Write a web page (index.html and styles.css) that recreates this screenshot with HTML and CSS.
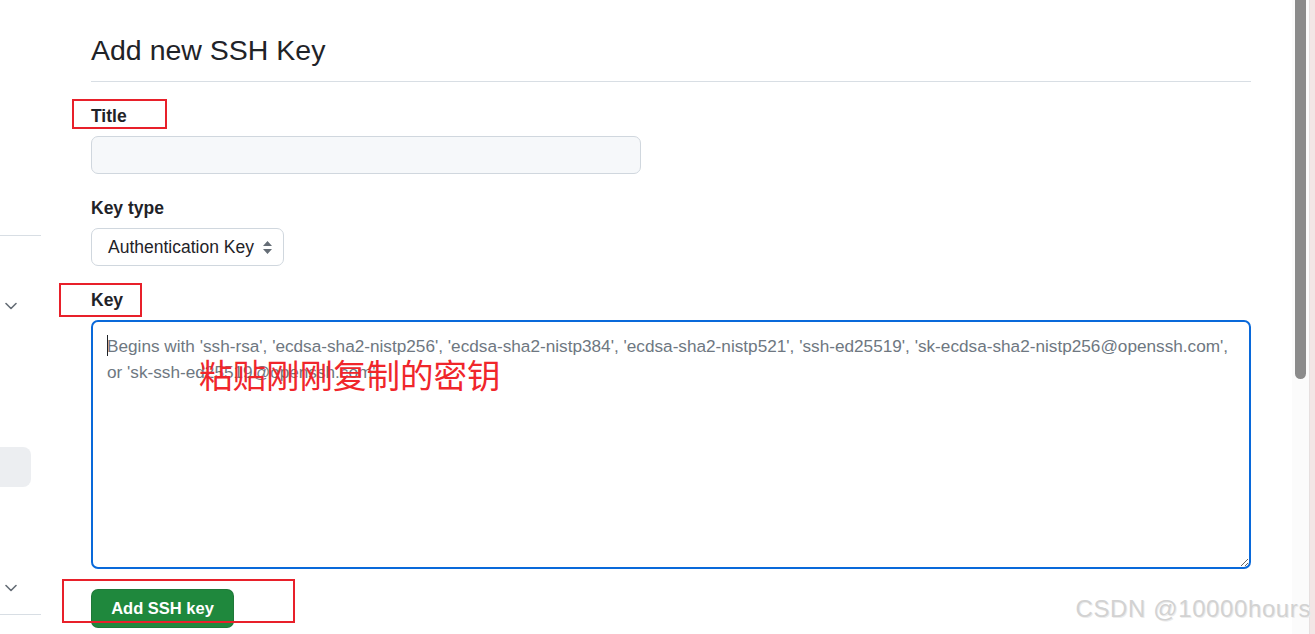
FILE: index.html
```html
<!DOCTYPE html>
<html>
  <head>
    <meta charset="utf-8">
    <title>Add new SSH Key</title>
    <link rel="stylesheet" href="styles.css">
  </head>

  <body>
    <div class="page">
      <aside class="side-nav">
        <div class="side-rule side-rule-top"></div>
        <div class="side-chevron side-chevron-top">
          <svg width="12" height="8" viewBox="0 0 12 8"><path d="M1 1.5 6 6.5 11 1.5" fill="none" stroke="#656d76" stroke-width="1.6" stroke-linecap="round" stroke-linejoin="round"/></svg>
        </div>
        <div class="side-item"></div>
        <div class="side-chevron side-chevron-bottom">
          <svg width="12" height="8" viewBox="0 0 12 8"><path d="M1 1.5 6 6.5 11 1.5" fill="none" stroke="#656d76" stroke-width="1.6" stroke-linecap="round" stroke-linejoin="round"/></svg>
        </div>
        <div class="side-rule"></div>
      </aside>

      <main class="main">
        <h2 class="subhead">Add new SSH Key</h2>

        <form class="key-form">
          <div class="form-group">
            <label class="form-label">Title</label>
            <input class="form-input title-input" type="text">
          </div>

          <div class="form-group">
            <label class="form-label">Key type</label>
            <div class="select-box">
              <span>Authentication Key</span>
              <svg width="11" height="15" viewBox="0 0 11 15"><path d="M5.5 1 10 6H1z M5.5 14 1 9h9z" fill="#656d76"/></svg>
            </div>
          </div>

          <div class="form-group">
            <label class="form-label">Key</label>
            <div class="key-wrap">
              <textarea class="key-area" placeholder="Begins with 'ssh-rsa', 'ecdsa-sha2-nistp256', 'ecdsa-sha2-nistp384', 'ecdsa-sha2-nistp521', 'ssh-ed25519', 'sk-ecdsa-sha2-nistp256@openssh.com',&#10;or 'sk-ssh-ed25519@openssh.com'"></textarea>
              <span class="caret"></span>
              <span class="note">粘贴刚刚复制的密钥</span>
            </div>
          </div>

          <button class="btn-primary" type="button">Add SSH key</button>
        </form>
      </main>

      <div class="scroll-track">
        <div class="scroll-thumb"></div>
      </div>
      <div class="edge-strip"></div>

      <div class="mark mark-title"></div>
      <div class="mark mark-key"></div>
      <div class="mark mark-button"></div>
      <div class="watermark">CSDN @10000hours</div>
    </div>
  </body>
</html>
```

FILE: styles.css
```css
* {
  box-sizing: border-box;
}

body {
  margin: 0;
  height: 634px;
  overflow: hidden;
  background: #ffffff;
  color: #1f2328;
  font-family: 'Liberation Sans', Arial, sans-serif;
}

.page {
  position: relative;
  display: flex;
  height: 634px;
}

/* left nav remnant */
.side-nav {
  width: 41px;
  flex-shrink: 0;
  display: flex;
  flex-direction: column;
}

.side-rule {
  height: 1px;
  width: 41px;
  background: #d8dee4;
}

.side-rule-top {
  margin-top: 235px;
}

.side-chevron {
  padding-left: 5px;
  height: 8px;
  line-height: 0;
}

.side-chevron-top {
  margin-top: 66px;
}

.side-item {
  margin-top: 137px;
  width: 31px;
  height: 40px;
  background: #eceef1;
  border-radius: 0 8px 8px 0;
}

.side-chevron-bottom {
  margin-top: 97px;
  margin-bottom: 22px;
}

/* main column */
.main {
  width: 1160px;
  margin-left: 50px;
  flex-shrink: 0;
}

.subhead {
  margin: 28px 0 0;
  padding-bottom: 8px;
  border-bottom: 1px solid #d8dee4;
  font-size: 28.5px;
  font-weight: 400;
  line-height: 45px;
}

.form-group {
  margin-top: 21px;
}

.form-label {
  display: block;
  margin-bottom: 7px;
  font-size: 17.5px;
  font-weight: 700;
  line-height: 26px;
}

.form-input {
  display: block;
  height: 38px;
  padding: 0 14px;
  border: 1px solid #d0d7de;
  border-radius: 7px;
  background: #f6f8fa;
  font: inherit;
  font-size: 17.5px;
}

.title-input {
  width: 550px;
}

.select-box {
  display: flex;
  align-items: center;
  justify-content: space-between;
  width: 193px;
  height: 38px;
  padding: 0 10px 0 16px;
  border: 1px solid #d0d7de;
  border-radius: 7px;
  background: #ffffff;
  font-size: 17.5px;
  color: #1f2328;
}

.key-wrap {
  position: relative;
}

.key-area {
  display: block;
  width: 1160px;
  height: 249px;
  padding: 11px 14px 9px;
  border: 2px solid #0969da;
  border-radius: 7px;
  outline: none;
  font-family: 'Liberation Sans', Arial, sans-serif;
  font-size: 17.2px;
  line-height: 26px;
  color: #1f2328;
}

.key-area::placeholder {
  color: #6e7781;
}

.caret {
  position: absolute;
  left: 16px;
  top: 15px;
  width: 1px;
  height: 21px;
  background: #1f2328;
}

.note {
  position: absolute;
  left: 108px;
  top: 36px;
  font-family: 'Noto Sans CJK SC', sans-serif;
  font-size: 33.5px;
  line-height: 36px;
  color: #f0262b;
}

.btn-primary {
  display: block;
  margin-top: 20px;
  width: 143px;
  height: 39px;
  border: 1px solid rgba(31, 35, 40, 0.15);
  border-radius: 7px;
  background: #1f883d;
  color: #ffffff;
  font-family: 'Liberation Sans', Arial, sans-serif;
  font-size: 16.5px;
  font-weight: 700;
  padding: 0;
}

/* browser scrollbar and window edge */
.scroll-track {
  margin-left: auto;
  width: 17px;
  background: #fbfbfb;
  padding: 0 3px;
  flex-shrink: 0;
}

.scroll-thumb {
  height: 379px;
  background: #8b8b8b;
  border-radius: 0 0 6px 6px;
}

.edge-strip {
  width: 6px;
  flex-shrink: 0;
  border-left: 1px solid #e6e0e0;
  background: #f3e6e6;
}

/* screenshot annotations */
.mark {
  position: absolute;
  border: 2px solid #e8202a;
}

.mark-title {
  left: 72px;
  top: 99px;
  width: 95px;
  height: 30px;
}

.mark-key {
  left: 59px;
  top: 283px;
  width: 83px;
  height: 34px;
}

.mark-button {
  left: 62px;
  top: 579px;
  width: 233px;
  height: 44px;
}

.watermark {
  position: absolute;
  right: 4px;
  top: 595px;
  font-family: 'Liberation Sans', Arial, sans-serif;
  font-size: 24px;
  font-weight: 400;
  letter-spacing: 0.6px;
  color: #d2d2d2;
  text-shadow: 1px 1px 0 #ececec;
}
```
